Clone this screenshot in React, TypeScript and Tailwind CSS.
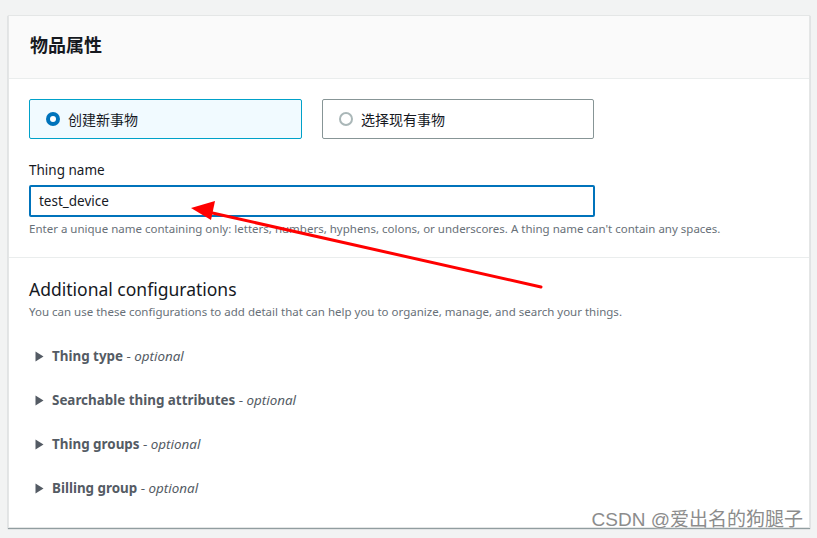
import React from 'react';

const sections = [
  'Thing type',
  'Searchable thing attributes',
  'Thing groups',
  'Billing group',
];

const Caret: React.FC = () => (
  <svg width="9" height="11" viewBox="0 0 9 11" className="shrink-0">
    <path d="M0.5 0.5 L8.5 5.5 L0.5 10.5 Z" fill="#545b64" />
  </svg>
);

const App: React.FC = () => {
  return (
    <div
      className="relative w-[817px] h-[538px] overflow-hidden bg-[#f2f3f3] pt-[15px] pl-[8px]"
      style={{ fontFamily: '"Noto Sans", "Noto Sans CJK SC", sans-serif' }}
    >
      <div className="w-[802px] h-[513px] bg-white border border-[#e4e6e6] shadow-[0_1px_1px_0_rgba(0,28,36,0.4)]">
        <div className="h-[63px] flex items-center pl-[21px] pb-[3px] bg-[#fafafa] border-b border-[#eaeded]">
          <h2 className="text-[18px] font-bold text-[#16191f]">物品属性</h2>
        </div>

        <div className="px-[20px] pt-[20px] pb-[20px] border-b border-[#eaeded]">
          <div className="flex gap-[20px]">
            <div className="w-[273px] h-[40px] flex items-center gap-[8px] pl-[16px] rounded-[2px] border border-[#00a1c9] bg-[#f1faff]">
              <span className="w-[14px] h-[14px] rounded-full bg-[#0073bb] flex items-center justify-center">
                <span className="w-[6px] h-[6px] rounded-full bg-white" />
              </span>
              <span className="text-[14px] text-[#16191f]">创建新事物</span>
            </div>
            <div className="w-[272px] h-[40px] flex items-center gap-[8px] pl-[16px] rounded-[2px] border border-[#879596] bg-white">
              <span className="w-[14px] h-[14px] rounded-full border-2 border-[#aab7b8] bg-white" />
              <span className="text-[14px] text-[#16191f]">选择现有事物</span>
            </div>
          </div>

          <div className="mt-[21px] text-[13.5px] leading-[20px] text-[#16191f]">Thing name</div>
          <div className="mt-[5px] w-[566px] h-[32px] flex items-center px-[8px] rounded-[2px] border-2 border-[#0073bb] text-[13.5px] text-[#16191f]">
            test_device
          </div>
          <div className="mt-[4px] text-[11.5px] leading-[16px] text-[#687078]">
            Enter a unique name containing only: letters, numbers, hyphens, colons, or underscores. A thing name can't contain any spaces.
          </div>
        </div>

        <div className="px-[20px] pt-[19px]">
          <h3 className="text-[17.5px] leading-[24px] text-[#16191f]">Additional configurations</h3>
          <p className="mt-[3px] text-[11.5px] leading-[16px] text-[#687078]">
            You can use these configurations to add detail that can help you to organize, manage, and search your things.
          </p>
          <div className="mt-[14px]">
            {sections.map((s) => (
              <div key={s} className="h-[44px] flex items-center gap-[8px] pl-[6px]">
                <Caret />
                <span className="text-[13.4px] text-[#545b64]">
                  <span className="font-bold">{s}</span>
                  <span> - </span>
                  <span className="italic">optional</span>
                </span>
              </div>
            ))}
          </div>
        </div>
      </div>

      <svg className="absolute left-0 top-0 pointer-events-none" width="817" height="538">
        <line x1="541" y1="287" x2="208" y2="212" stroke="#ff0000" strokeWidth="3" strokeLinecap="round" />
        <path d="M191 208 L215 201 L211 220 Z" fill="#ff0000" />
      </svg>

      <div
        className="absolute right-[14px] bottom-[6px] text-[19px] leading-[24px] text-[#8c8c8c] [text-shadow:0_0_2px_#fff]"
        style={{ fontFamily: '"Liberation Sans", "Noto Sans CJK SC", sans-serif' }}
      >
        CSDN @爱出名的狗腿子
      </div>
    </div>
  );
};

export default App;
